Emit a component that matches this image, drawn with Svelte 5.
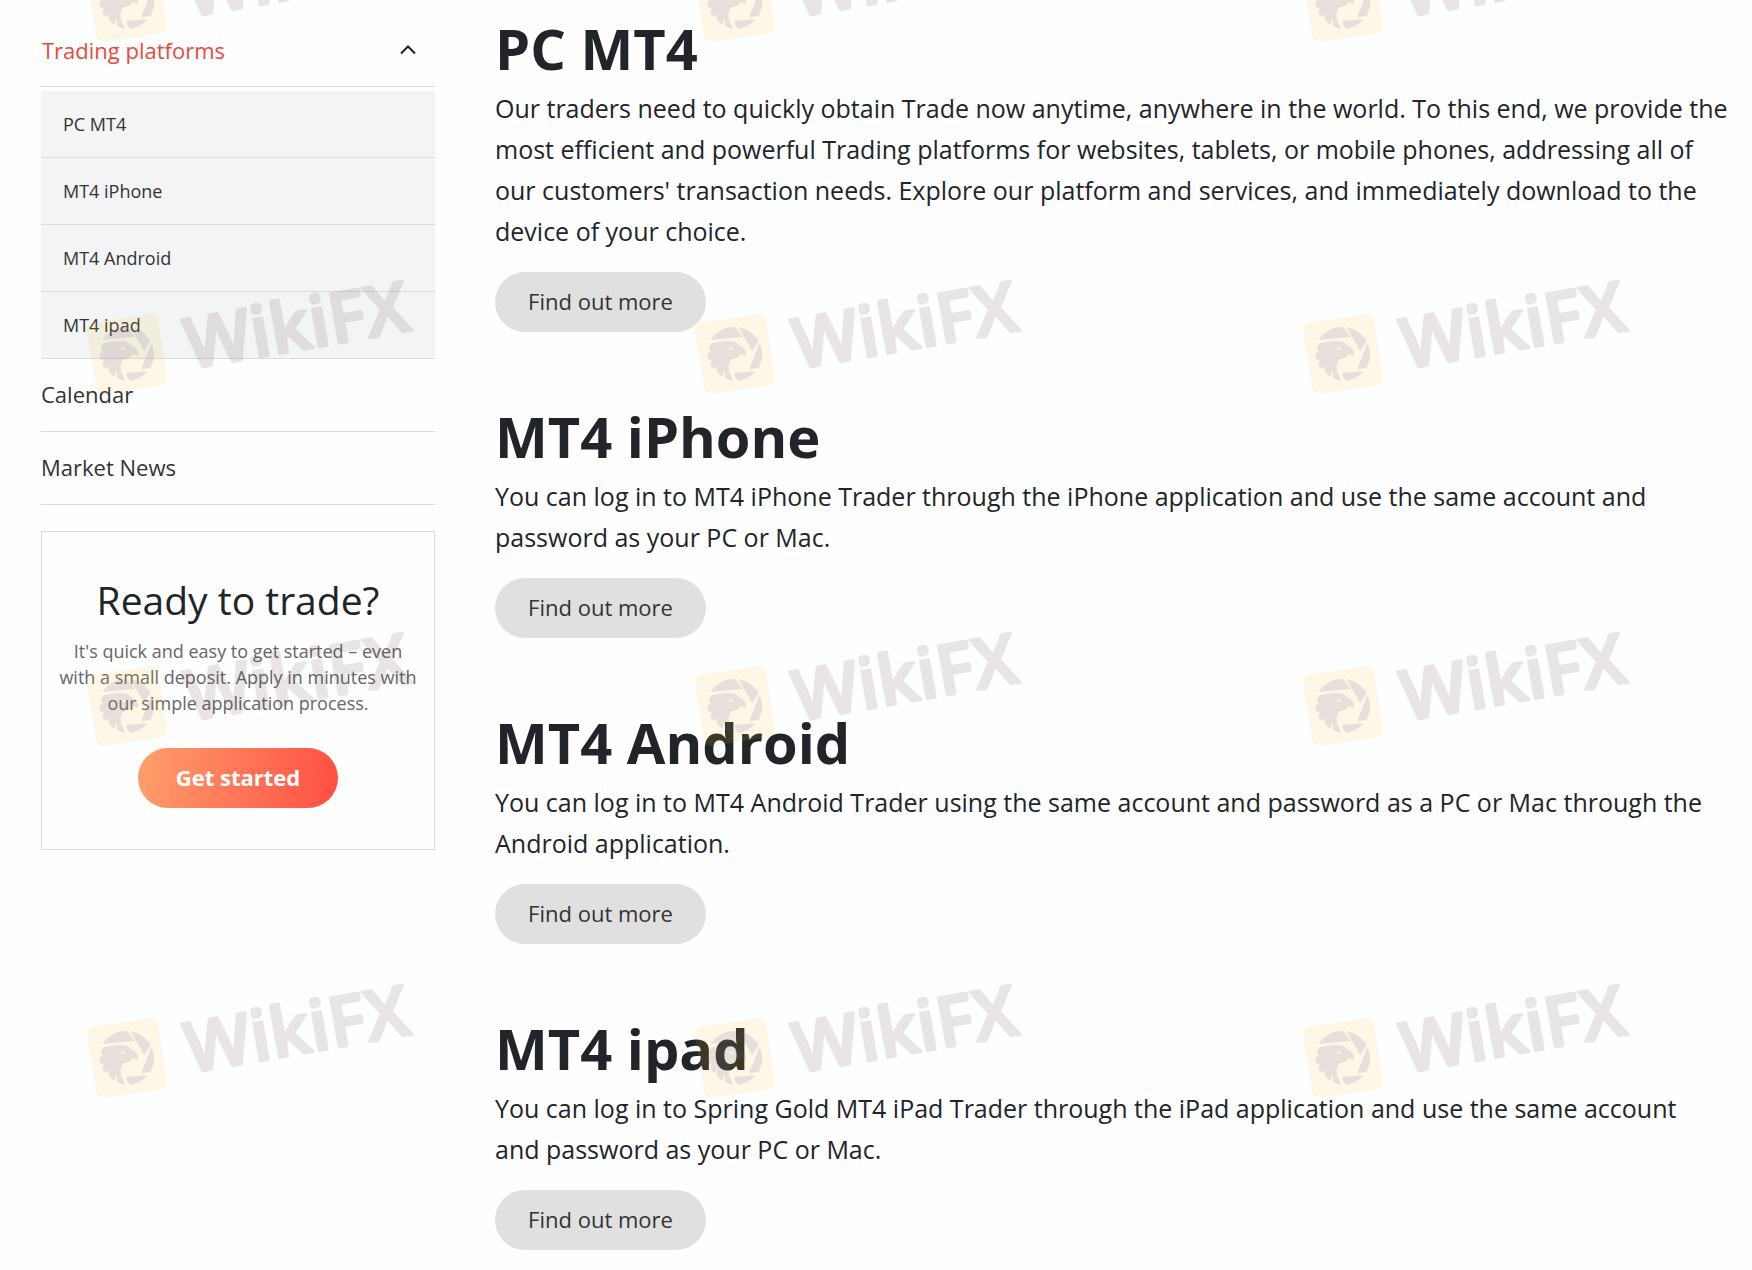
<script>
  const platforms = ['PC MT4', 'MT4 iPhone', 'MT4 Android', 'MT4 ipad'];
  const pages = ['Calendar', 'Market News'];
  const sections = [
    {
      title: 'PC MT4',
      text: "Our traders need to quickly obtain Trade now anytime, anywhere in the world. To this end, we provide the most efficient and powerful Trading platforms for websites, tablets, or mobile phones, addressing all of our customers' transaction needs. Explore our platform and services, and immediately download to the device of your choice."
    },
    {
      title: 'MT4 iPhone',
      text: 'You can log in to MT4 iPhone Trader through the iPhone application and use the same account and password as your PC or Mac.'
    },
    {
      title: 'MT4 Android',
      text: 'You can log in to MT4 Android Trader using the same account and password as a PC or Mac through the Android application.'
    },
    {
      title: 'MT4 ipad',
      text: 'You can log in to Spring Gold MT4 iPad Trader through the iPad application and use the same account and\u00a0password as your PC or Mac.'
    }
  ];
  const marks = [];
  for (let row = 0; row < 4; row++) {
    for (let col = 0; col < 3; col++) {
      marks.push({ x: 127 + col * 608, y: 2 + row * 352 });
    }
  }
  let open = $state(true);
</script>

<div class="page">
  <aside>
    <nav aria-label="Trading">
      <button class="toggle" type="button" aria-expanded={open} onclick={() => (open = !open)}>
        <span>Trading platforms</span>
        <svg class="chevron" viewBox="0 0 16 10" aria-hidden="true"><path d="M1 8.5 8 1.5l7 7" /></svg>
      </button>
      {#if open}
        <ul class="sub">
          {#each platforms as name}
            <li><a href="#{name.replace(' ', '-')}">{name}</a></li>
          {/each}
        </ul>
      {/if}
      <ul class="links">
        {#each pages as name}
          <li><a href="#{name.replace(' ', '-')}">{name}</a></li>
        {/each}
      </ul>
    </nav>
    <section class="card">
      <h2>Ready to trade?</h2>
      <p>It's quick and easy to get started – even with a small deposit. Apply in minutes with our simple application process.</p>
      <button class="start" type="button">Get started</button>
    </section>
  </aside>

  <main>
    {#each sections as s}
      <section class="platform" id={s.title.replace(' ', '-')}>
        <h1>{s.title}</h1>
        <p>{s.text}</p>
        <button class="more" type="button">Find out more</button>
      </section>
    {/each}
  </main>

  <svg class="watermark" aria-hidden="true">
    {#each marks as m}
      <g transform="translate({m.x} {m.y})">
        <rect class="tile" x="-36" y="-36" width="72" height="72" rx="8" transform="rotate(-9)" />
        <g class="eagle" transform="scale(0.3333) translate(-137 -143)">
          <path d="M65 100A81 81 0 0 1 138 62L161 92Z" />
          <path d="M147 63A81 81 0 0 1 207 103L189 134Z" />
          <path d="M211 110A81 81 0 0 1 206 186L179 187Z" />
          <path d="M199 194A81 81 0 0 1 146 224Q136 212 134 200Z" />
          <path fill-rule="evenodd" d="M66 111Q92 104 122 104Q142 106 150 117Q165 122 171 140L167 150L161 145L144 147L152 152L138 155Q122 160 118 174Q114 196 133 224Q118 223 108 214L104 190L99 210Q86 203 82 194L84 177L74 188Q64 178 63 169L69 158L58 162Q55 152 56 142L65 134L58 134Q59 121 66 111ZM114 124Q122 131 133 130L130 124Z" />
        </g>
        <text x="59" y="26" transform="rotate(-10)">WikiFX</text>
      </g>
    {/each}
  </svg>
</div>

<style>
  :global(body) {
    margin: 0;
    background: #fefefe;
  }
  .page {
    position: relative;
    overflow: hidden;
    display: grid;
    grid-template-columns: 394px minmax(0, 1fr);
    column-gap: 60px;
    padding: 14px 24px 20px 41px;
    color: #212529;
    font-family: 'Segoe UI', 'Open Sans', sans-serif;
  }
  button {
    font: inherit;
    border: 0;
    cursor: pointer;
  }
  a {
    color: inherit;
    text-decoration: none;
  }
  ul {
    margin: 0;
    padding: 0;
    list-style: none;
  }
  h1, h2, p {
    margin: 0;
  }
  .toggle {
    display: flex;
    width: 100%;
    height: 73px;
    box-sizing: border-box;
    align-items: center;
    justify-content: space-between;
    padding: 0 19px 1px 1px;
    border-bottom: 1px solid #d8dbdd;
    background: none;
    color: #e94b3c;
    font-size: 22px;
  }
  .chevron {
    width: 16px;
    height: 10px;
    fill: none;
    stroke: #222;
    stroke-width: 2;
  }
  .sub {
    margin-top: 4px;
    background: #f2f4f6;
  }
  .sub a {
    display: block;
    padding-left: 22px;
    border-bottom: 1px solid #d8dbdd;
    font-size: 18px;
    line-height: 66px;
    color: #333;
  }
  .links a {
    display: block;
    padding-bottom: 2px;
    border-bottom: 1px solid #d8dbdd;
    font-size: 22px;
    line-height: 70px;
    color: #333;
  }
  .card {
    display: flex;
    flex-direction: column;
    align-items: center;
    margin-top: 26px;
    padding: 43px 16px 41px;
    border: 1px solid #d8dbdd;
    text-align: center;
  }
  .card h2 {
    font-size: 39px;
    line-height: 50px;
    font-weight: 400;
  }
  .card p {
    margin: 13px 0 32px;
    font-size: 18px;
    line-height: 26px;
    color: #666;
  }
  .start {
    width: 200px;
    height: 60px;
    padding: 0 0 2px;
    border-radius: 30px;
    background: linear-gradient(100deg, #ffa06c, #ff4e42);
    color: #fff;
    font-size: 22px;
    font-weight: 700;
  }
  .platform + .platform {
    margin-top: 70px;
  }
  h1 {
    margin-bottom: 6px;
    font-size: 56px;
    line-height: 68px;
    font-weight: 700;
  }
  .platform p {
    font-size: 25px;
    line-height: 41px;
  }
  .more {
    display: block;
    margin-top: 20px;
    width: 211px;
    height: 60px;
    padding: 0 0 2px;
    border-radius: 30px;
    background: #e0e0e0;
    color: #333;
    font-size: 22px;
  }
  .watermark {
    position: absolute;
    inset: 0;
    width: 100%;
    height: 100%;
    pointer-events: none;
  }
  .tile {
    fill: rgba(245, 195, 50, 0.12);
  }
  .eagle {
    fill: rgba(110, 90, 170, 0.15);
  }
  .watermark text {
    fill: #46282d;
    stroke: #46282d;
    stroke-width: 3;
    stroke-linejoin: round;
    opacity: 0.11;
    font-size: 70px;
    font-weight: 600;
  }
</style>
